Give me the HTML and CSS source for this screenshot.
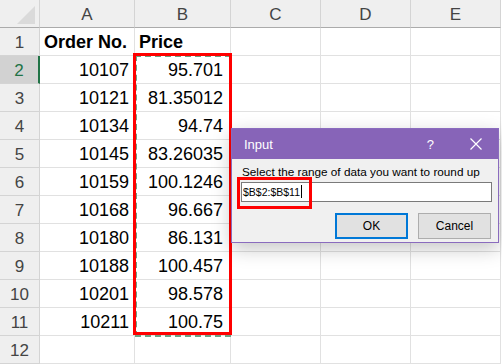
FILE: index.html
```html
<!DOCTYPE html>
<html lang="en">
<head>
    <meta charset="UTF-8">
    <title>Round up - Input</title>
    <link rel="stylesheet" href="styles.css">
</head>
<body>
    <div class="sheet">
        <!-- Column headers -->
        <div class="row head-row">
            <div class="corner">
                <svg width="39" height="27" viewBox="0 0 39 27"><polygon points="17,24 35,24 35,6" fill="#dadada"/></svg>
            </div>
            <div class="col-head">A</div>
            <div class="col-head">B</div>
            <div class="col-head">C</div>
            <div class="col-head">D</div>
            <div class="col-head">E</div>
        </div>

        <div class="row">
            <div class="row-head">1</div>
            <div class="cell bold">Order No.</div>
            <div class="cell bold">Price</div>
            <div class="cell"></div><div class="cell"></div><div class="cell"></div>
        </div>
        <div class="row">
            <div class="row-head active">2</div>
            <div class="cell num">10107</div>
            <div class="cell num b">95.701</div>
            <div class="cell"></div><div class="cell"></div><div class="cell"></div>
        </div>
        <div class="row">
            <div class="row-head">3</div>
            <div class="cell num">10121</div>
            <div class="cell num b">81.35012</div>
            <div class="cell"></div><div class="cell"></div><div class="cell"></div>
        </div>
        <div class="row">
            <div class="row-head">4</div>
            <div class="cell num">10134</div>
            <div class="cell num b">94.74</div>
            <div class="cell"></div><div class="cell"></div><div class="cell"></div>
        </div>
        <div class="row">
            <div class="row-head">5</div>
            <div class="cell num">10145</div>
            <div class="cell num b">83.26035</div>
            <div class="cell"></div><div class="cell"></div><div class="cell"></div>
        </div>
        <div class="row">
            <div class="row-head">6</div>
            <div class="cell num">10159</div>
            <div class="cell num b">100.1246</div>
            <div class="cell"></div><div class="cell"></div><div class="cell"></div>
        </div>
        <div class="row">
            <div class="row-head">7</div>
            <div class="cell num">10168</div>
            <div class="cell num b">96.667</div>
            <div class="cell"></div><div class="cell"></div><div class="cell"></div>
        </div>
        <div class="row">
            <div class="row-head">8</div>
            <div class="cell num">10180</div>
            <div class="cell num b">86.131</div>
            <div class="cell"></div><div class="cell"></div><div class="cell"></div>
        </div>
        <div class="row">
            <div class="row-head">9</div>
            <div class="cell num">10188</div>
            <div class="cell num b">100.457</div>
            <div class="cell"></div><div class="cell"></div><div class="cell"></div>
        </div>
        <div class="row">
            <div class="row-head">10</div>
            <div class="cell num">10201</div>
            <div class="cell num b">98.578</div>
            <div class="cell"></div><div class="cell"></div><div class="cell"></div>
        </div>
        <div class="row">
            <div class="row-head">11</div>
            <div class="cell num">10211</div>
            <div class="cell num b">100.75</div>
            <div class="cell"></div><div class="cell"></div><div class="cell"></div>
        </div>
        <div class="row">
            <div class="row-head">12</div>
            <div class="cell"></div><div class="cell"></div>
            <div class="cell"></div><div class="cell"></div><div class="cell"></div>
        </div>

        <!-- Copy range + annotation -->
        <div class="ants"></div>
        <div class="red-box"></div>

        <!-- Input dialog -->
        <div class="dialog">
            <div class="dialog-title">
                <span class="title-text">Input</span>
                <span class="help">?</span>
                <svg class="close" width="12" height="12" viewBox="0 0 12 12">
                    <path d="M0.5 0.5 L11.5 11.5 M11.5 0.5 L0.5 11.5" stroke="#fff" stroke-width="1.2"/>
                </svg>
            </div>
            <div class="dialog-body">
                <div class="prompt">Select the range of data you want to round up</div>
                <div class="input-box">$B$2:$B$11<span class="caret"></span></div>
                <div class="buttons">
                    <button class="ok-btn">OK</button>
                    <button class="cancel-btn">Cancel</button>
                </div>
            </div>
            <div class="input-mark"></div>
        </div>
    </div>
</body>
</html>
```

FILE: styles.css
```css
* {
    margin: 0;
    padding: 0;
    box-sizing: border-box;
}
body {
    background-color: #fff;
    font-family: 'Liberation Sans', Arial, sans-serif;
    overflow: hidden;
}
.sheet {
    position: relative;
    width: 502px;
    height: 364px;
}
.row {
    display: grid;
    grid-template-columns: 40px 95px 96px 90px 90px 90px;
    height: 28px;
}
.corner, .col-head {
    background-color: #efefef;
    border-right: 1px solid #d4d4d4;
    border-bottom: 1px solid #ababab;
}
.corner svg {
    display: block;
}
.col-head {
    text-align: center;
    color: #444;
    font-size: 17px;
    line-height: 24px;
    padding-top: 3px;
}
.row-head {
    background-color: #efefef;
    border-right: 1px solid #d4d4d4;
    border-bottom: 1px solid #d4d4d4;
    text-align: center;
    color: #444;
    font-size: 17px;
    line-height: 25px;
    padding-top: 2px;
}
.row-head.active {
    background-color: #d2d2d2;
    color: #217346;
    border-right: 2px solid #217346;
}
.cell {
    border-right: 1px solid #e1e1e1;
    border-bottom: 1px solid #e1e1e1;
    font-size: 18px;
    line-height: 25px;
    padding: 2px 4px 0 4px;
    color: #000;
    white-space: nowrap;
}
.bold {
    font-weight: bold;
}
.num {
    text-align: right;
    padding-right: 5px;
}
.num.b {
    padding-right: 7px;
}
.ants {
    position: absolute;
    left: 135px;
    top: 55px;
    width: 96px;
    height: 282px;
    border: 2px dashed #6aa485;
}
.red-box {
    position: absolute;
    left: 133px;
    top: 53px;
    width: 99px;
    height: 282px;
    border: 3px solid #f00;
}
.dialog {
    position: absolute;
    left: 231px;
    top: 128px;
    width: 268px;
    height: 115px;
    background-color: #f0f0f0;
    border: 1px solid #8a6bbe;
    box-shadow: 0 6px 18px rgba(0, 0, 0, 0.22);
}
.dialog-title {
    display: flex;
    align-items: center;
    height: 30px;
    background-color: #8764b8;
    color: #fff;
    padding: 0 16px 0 12px;
    font-size: 13px;
}
.title-text {
    flex: 1;
}
.help {
    font-size: 13px;
    margin-right: 36px;
}
.close {
    display: block;
}
.dialog-body {
    padding: 6px 6px 0 9px;
    font-size: 11.75px;
    color: #000;
}
.prompt {
    padding-left: 1px;
    line-height: 14px;
    white-space: nowrap;
}
.input-box {
    margin-top: 3px;
    height: 20px;
    background-color: #fff;
    border: 1px solid #7a7a7a;
    font-size: 10.5px;
    line-height: 18px;
    padding-left: 1px;
}
.caret {
    display: inline-block;
    width: 1px;
    height: 13px;
    background-color: #000;
    vertical-align: -2px;
    margin-left: 1px;
}
.buttons {
    display: flex;
    justify-content: flex-end;
    gap: 10px;
    margin-top: 11px;
    padding-right: 1px;
}
.buttons button {
    width: 73px;
    height: 26px;
    font-family: 'Liberation Sans', Arial, sans-serif;
    font-size: 12px;
    color: #000;
    background-color: #e1e1e1;
    border: 1px solid #adadad;
}
.buttons .ok-btn {
    border: 2px solid #0078d7;
}
.input-mark {
    position: absolute;
    left: 5px;
    top: 48px;
    width: 75px;
    height: 32px;
    border: 3px solid #f00;
}
```
